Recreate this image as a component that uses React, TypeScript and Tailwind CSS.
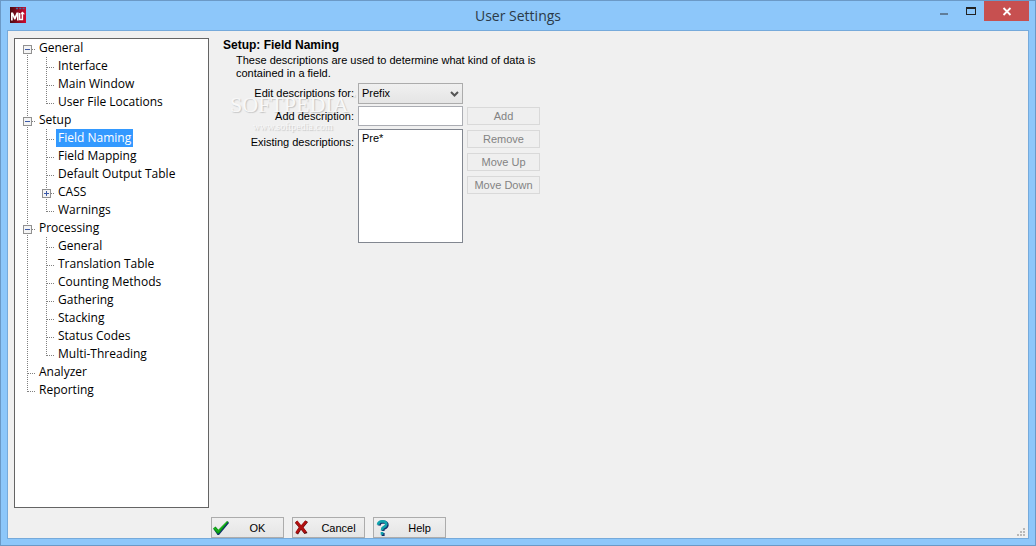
import { useState, type ReactNode } from "react";

type Guide = "none" | "first" | "full" | "branch" | "last";

type Item = { name: string; children?: string[]; collapsed?: string[] };

const sections: Item[] = [
  { name: "General", children: ["Interface", "Main Window", "User File Locations"] },
  {
    name: "Setup",
    children: ["Field Naming", "Field Mapping", "Default Output Table", "CASS", "Warnings"],
    collapsed: ["CASS"],
  },
  {
    name: "Processing",
    children: [
      "General",
      "Translation Table",
      "Counting Methods",
      "Gathering",
      "Stacking",
      "Status Codes",
      "Multi-Threading",
    ],
  },
  { name: "Analyzer" },
  { name: "Reporting" },
];

function GuideCell({ guide, box }: { guide: Guide; box?: "minus" | "plus" }) {
  const top = guide === "first" ? 10 : 0;
  const bottom = guide === "last" ? 11 : 18;
  return (
    <svg width="19" height="18" viewBox="0 0 19 18" shapeRendering="crispEdges" className="block shrink-0" aria-hidden="true">
      {guide !== "none" && <path d={`M7.5 ${top}V${bottom}`} stroke="#808080" strokeDasharray="1 1" />}
      {guide !== "none" && guide !== "full" && <path d="M8 10.5H16" stroke="#808080" strokeDasharray="1 1" />}
      {box && (
        <>
          <rect x="3.5" y="6.5" width="8" height="8" fill="#f4f4f4" stroke="#919191" />
          <path d="M5 10.5H10" stroke="#3c5aa8" />
          {box === "plus" && <path d="M7.5 8V13" stroke="#3c5aa8" />}
        </>
      )}
    </svg>
  );
}

function Label({ name, selected, onSelect }: { name: string; selected: boolean; onSelect: () => void }) {
  return (
    <button
      type="button"
      onClick={onSelect}
      className={
        selected
          ? "-ml-0.5 h-[18px] bg-[#3399ff] px-0.5 leading-[18px] whitespace-nowrap text-white"
          : "-ml-0.5 h-[18px] px-0.5 leading-[18px] whitespace-nowrap text-black"
      }
    >
      {name}
    </button>
  );
}

function Tree() {
  const [closed, setClosed] = useState<string[]>([]);
  const [selected, setSelected] = useState("Setup/Field Naming");
  const toggle = (name: string) =>
    setClosed((c) => (c.includes(name) ? c.filter((n) => n !== name) : [...c, name]));

  return (
    <nav
      aria-label="Settings"
      className="w-[195px] shrink-0 overflow-auto border border-[#646464] bg-white pl-[5px] font-['Open_Sans','Noto_Sans',sans-serif] text-[12px]"
    >
      <ul>
        {sections.map((s, i) => {
          const last = i === sections.length - 1;
          const open = !closed.includes(s.name);
          const guide: Guide = i === 0 ? "first" : last ? "last" : "branch";
          return (
            <li key={s.name}>
              <div className="flex h-[18px]">
                {s.children ? (
                  <button type="button" aria-label={`Toggle ${s.name}`} aria-expanded={open} onClick={() => toggle(s.name)}>
                    <GuideCell guide={guide} box={open ? "minus" : "plus"} />
                  </button>
                ) : (
                  <GuideCell guide={guide} />
                )}
                <Label name={s.name} selected={selected === s.name} onSelect={() => setSelected(s.name)} />
              </div>
              {s.children && open && (
                <ul>
                  {s.children.map((c, j) => (
                    <li key={c} className="flex h-[18px]">
                      <GuideCell guide={last ? "none" : "full"} />
                      <GuideCell
                        guide={j === s.children!.length - 1 ? "last" : "branch"}
                        box={s.collapsed?.includes(c) ? "plus" : undefined}
                      />
                      <Label
                        name={c}
                        selected={selected === `${s.name}/${c}`}
                        onSelect={() => setSelected(`${s.name}/${c}`)}
                      />
                    </li>
                  ))}
                </ul>
              )}
            </li>
          );
        })}
      </ul>
    </nav>
  );
}

function AppIcon() {
  return (
    <svg width="16" height="16" viewBox="0 0 16 16" aria-hidden="true">
      <defs>
        <linearGradient id="logo" x1="0" x2="1">
          <stop offset="0" stopColor="#4a0a12" />
          <stop offset="1" stopColor="#d00a30" />
        </linearGradient>
      </defs>
      <rect width="16" height="16" fill="url(#logo)" />
      <path d="M6 1.5h2M9.3 1.5h2M12.6 1.5h2" stroke="#4a6c9c" strokeWidth="1.4" />
      <path d="M1 13.5V5.5H3L4.8 9.5L6.6 5.5H8.6V13.5H7V9L5.4 12.5H4.2L2.7 9V13.5Z" fill="#fff" />
      <path d="M9.6 6V12.6H12.4V5" fill="none" stroke="#fff" strokeWidth="1.5" />
      <path d="M10.4 7.2L12.4 4.4L15 7.2Z" fill="#fff" />
    </svg>
  );
}

function TitleBar() {
  return (
    <header className="grid h-[29px] grid-cols-[1fr_auto_1fr] items-start">
      <div className="pt-1.5 pl-[9px]">
        <AppIcon />
      </div>
      <h1 className="font-['Open_Sans','Noto_Sans',sans-serif] text-[14px] leading-[29px] text-[#2b3a48]">User Settings</h1>
      <div className="flex justify-end pr-1.5">
        <button type="button" aria-label="Minimize" className="h-5 w-[27px]">
          <svg width="27" height="20" shapeRendering="crispEdges">
            <rect x="10" y="12" width="8" height="2" fill="#5f7d99" />
          </svg>
        </button>
        <button type="button" aria-label="Maximize" className="h-5 w-[27px]">
          <svg width="27" height="20" shapeRendering="crispEdges">
            <path d="M9 6h10v8h-10zM10 8v5h8v-5z" fill="#222" fillRule="evenodd" />
          </svg>
        </button>
        <button type="button" aria-label="Close" className="h-5 w-[45px] bg-[#c75050]">
          <svg width="45" height="20">
            <path d="M19.5 7L26.5 14M26.5 7L19.5 14" stroke="#fff" strokeWidth="1.8" />
          </svg>
        </button>
      </div>
    </header>
  );
}

function SideButton({ children }: { children: ReactNode }) {
  return (
    <button type="button" disabled className="h-[18px] border border-[#d9d9d9] bg-[#efefef] text-[11px] leading-4 text-[#838383]">
      {children}
    </button>
  );
}

function FieldNaming() {
  return (
    <main className="ml-3.5 min-w-0 flex-1 text-[11px] leading-[13px]">
      <h2 className="text-[12px] leading-[14px] font-bold">Setup: Field Naming</h2>
      <p className="mt-0.5 ml-[13px] w-[305px]">
        These descriptions are used to determine what kind of data is contained in a field.
      </p>
      <div className="relative mt-[3px] grid w-fit grid-cols-[131px_105px_73px] gap-x-1">
        <div
          aria-hidden="true"
          className="pointer-events-none absolute top-2.5 left-[7px] font-['Liberation_Serif',serif] text-[#f8f8f8] [text-shadow:1px_1px_1px_#c4c4c4]"
        >
          <div className="flex items-start text-[22px] leading-6">
            SOFTPEDIA<span className="text-[7px] leading-2">™</span>
          </div>
          <div className="pt-1 text-center text-[10px] leading-3">www.softpedia.com</div>
        </div>
        <label htmlFor="kind" className="relative pt-1 text-right">Edit descriptions for:</label>
        <div className="relative h-[21px]">
          <select
            id="kind"
            className="size-full appearance-none border border-[#acacac] bg-linear-to-b from-[#f0f0f0] to-[#e5e5e5] pl-[3px]"
          >
            <option>Prefix</option>
          </select>
          <svg width="9" height="6" viewBox="0 0 9 6" className="pointer-events-none absolute top-2 right-1" aria-hidden="true">
            <path d="M1 1L4.5 4.5L8 1" fill="none" stroke="#555" strokeWidth="2" />
          </svg>
        </div>
        <span />
        <label htmlFor="description" className="relative pt-1.5 text-right">Add description:</label>
        <div className="pt-0.5 pb-[3px]">
          <input id="description" type="text" className="block h-5 w-full border border-[#abadb3] bg-white px-[3px]" />
        </div>
        <div className="row-span-2 flex flex-col gap-[5px] pt-[3px]">
          <SideButton>Add</SideButton>
          <SideButton>Remove</SideButton>
          <SideButton>Move Up</SideButton>
          <SideButton>Move Down</SideButton>
        </div>
        <label htmlFor="existing" className="relative pt-[7px] text-right">Existing descriptions:</label>
        <select id="existing" multiple className="h-[114px] appearance-none overflow-hidden border border-[#828790] bg-white pt-0.5">
          <option className="px-[3px] py-0">Pre*</option>
        </select>
      </div>
    </main>
  );
}

function FootButton({ icon, children }: { icon: ReactNode; children: ReactNode }) {
  return (
    <button
      type="button"
      className="flex h-[21px] w-[73px] items-center border border-[#acacac] bg-linear-to-b from-[#f0f0f0] to-[#e5e5e5] text-[11px] leading-4"
    >
      {icon}
      <span className="flex-1 pl-0.5 text-center">{children}</span>
    </button>
  );
}

function Footer() {
  return (
    <footer className="flex items-end pt-[9px] pl-[197px]">
      <div className="flex flex-1 gap-2">
        <FootButton
          icon={
            <svg width="18" height="18" viewBox="0 0 18 18" aria-hidden="true">
              <path d="M1.5 10L4 8.5L6.5 11.5L16 2.5L17 4L7 16H5.5Z" fill="#10306a" />
              <path d="M1 9.5L3.5 7.5L6.3 10.8L15 2L16.3 2.8L6.8 14.5H5.3Z" fill="#0b9a12" />
              <path d="M2.5 9L6 12.5L14.5 3.5" fill="none" stroke="#1fc022" />
            </svg>
          }
        >
          OK
        </FootButton>
        <FootButton
          icon={
            <svg width="18" height="18" viewBox="0 0 18 18" aria-hidden="true">
              <path d="M3.5 2L8 6.5L12.5 1.5L15 3L10.5 8.5L14.5 14L11.5 15L8 10.8L5 15.5L2.5 14L5.8 8.3L2 4Z" fill="#4f0808" />
              <path d="M3.3 2.5L7.8 8L3.5 14M13.3 2.3L8.3 8.2L12.5 13.5" fill="none" stroke="#b01010" strokeWidth="2.8" />
            </svg>
          }
        >
          Cancel
        </FootButton>
        <FootButton
          icon={
            <svg width="18" height="18" viewBox="0 0 18 18" aria-hidden="true">
              <path d="M5 6.5Q5.5 3 9.2 3Q13.5 3.2 13.2 6Q13 8 10.5 9Q9 9.7 9 12M7.6 15.5H10.6" fill="none" stroke="#10306a" strokeWidth="3" />
              <path d="M4 5.8Q4.5 2.3 8.3 2.3Q12.6 2.5 12.3 5.3Q12 7.2 9.6 8.2Q8 9 8 11.2M6.7 14.4H9.4" fill="none" stroke="#0fa3ad" strokeWidth="2.6" />
            </svg>
          }
        >
          Help
        </FootButton>
      </div>
      <svg width="8" height="8" shapeRendering="crispEdges" className="mr-[3px] mb-[2px]" fill="#b9b9b9" aria-hidden="true">
        <path d="M6 0h2v2h-2zM3 3h2v2h-2zM6 3h2v2h-2zM0 6h2v2h-2zM3 6h2v2h-2zM6 6h2v2h-2z" />
      </svg>
    </footer>
  );
}

export default function App() {
  return (
    <div className="flex h-screen flex-col border border-[#6b99c6] bg-[#8dc7fa] font-['Liberation_Sans',Arial,sans-serif] text-black">
      <TitleBar />
      <div className="mx-1.5 mb-1.5 flex min-h-0 flex-1 flex-col border border-[#76aadb] bg-[#f0f0f0] pt-[7px] pl-1.5">
        <div className="flex min-h-0 flex-1">
          <Tree />
          <FieldNaming />
        </div>
        <Footer />
      </div>
    </div>
  );
}
